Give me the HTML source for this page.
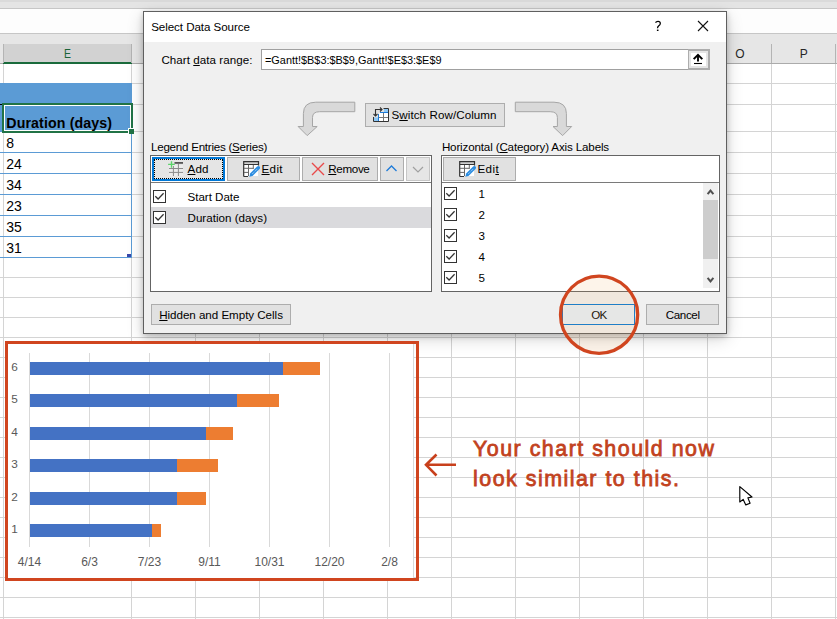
<!DOCTYPE html>
<html><head><meta charset="utf-8"><style>
html,body{margin:0;padding:0;}
body{width:837px;height:619px;overflow:hidden;position:relative;background:#fff;font-family:"Liberation Sans",sans-serif;}
body>div,body>svg{position:absolute;}
.t{white-space:nowrap;line-height:1;}
u{text-decoration:underline;text-underline-offset:1px;}
</style></head><body>
<div style="left:0px;top:0px;width:837px;height:8px;background:#e4e4e4"></div>
<div style="left:0px;top:0px;width:837px;height:2px;background:#dadada"></div>
<div style="left:0px;top:8px;width:837px;height:1px;background:#c6c6c6"></div>
<div style="left:0px;top:9px;width:837px;height:24px;background:#fdfdfd"></div>
<div style="left:0px;top:33px;width:837px;height:1px;background:#c6c6c6"></div>
<div style="left:0px;top:34px;width:837px;height:10px;background:#e6e6e6"></div>
<div style="left:0px;top:44px;width:837px;height:19px;background:#e6e6e6"></div>
<div style="left:0px;top:63px;width:837px;height:1px;background:#ababab"></div>
<div style="left:4px;top:44px;width:127px;height:18px;background:#d2d2d2"></div>
<div style="left:3px;top:62px;width:129px;height:2px;background:#1a6b3c"></div>
<div style="left:3px;top:44px;width:1px;height:19px;background:#b4b4b4"></div>
<div style="left:131px;top:44px;width:1px;height:19px;background:#b4b4b4"></div>
<div style="left:195px;top:44px;width:1px;height:19px;background:#b4b4b4"></div>
<div style="left:259px;top:44px;width:1px;height:19px;background:#b4b4b4"></div>
<div style="left:323px;top:44px;width:1px;height:19px;background:#b4b4b4"></div>
<div style="left:387px;top:44px;width:1px;height:19px;background:#b4b4b4"></div>
<div style="left:451px;top:44px;width:1px;height:19px;background:#b4b4b4"></div>
<div style="left:515px;top:44px;width:1px;height:19px;background:#b4b4b4"></div>
<div style="left:579px;top:44px;width:1px;height:19px;background:#b4b4b4"></div>
<div style="left:643px;top:44px;width:1px;height:19px;background:#b4b4b4"></div>
<div style="left:707px;top:44px;width:1px;height:19px;background:#b4b4b4"></div>
<div style="left:771px;top:44px;width:1px;height:19px;background:#b4b4b4"></div>
<div style="left:835px;top:44px;width:1px;height:19px;background:#b4b4b4"></div>
<div class="t" style="left:3.5px;top:45px;width:127px;text-align:center;color:#1a6338;font-size:12.3px;line-height:19px;transform:scaleX(0.85)">E</div>
<div class="t" style="left:708px;top:45px;width:64px;text-align:center;color:#262626;font-size:12px;line-height:19px">O</div>
<div class="t" style="left:771.8px;top:45px;width:64px;text-align:center;color:#262626;font-size:12px;line-height:19px">P</div>
<div style="left:3px;top:64px;width:1px;height:555px;background:#d4d4d4"></div>
<div style="left:131px;top:64px;width:1px;height:555px;background:#d4d4d4"></div>
<div style="left:195px;top:64px;width:1px;height:555px;background:#d4d4d4"></div>
<div style="left:259px;top:64px;width:1px;height:555px;background:#d4d4d4"></div>
<div style="left:323px;top:64px;width:1px;height:555px;background:#d4d4d4"></div>
<div style="left:387px;top:64px;width:1px;height:555px;background:#d4d4d4"></div>
<div style="left:451px;top:64px;width:1px;height:555px;background:#d4d4d4"></div>
<div style="left:515px;top:64px;width:1px;height:555px;background:#d4d4d4"></div>
<div style="left:579px;top:64px;width:1px;height:555px;background:#d4d4d4"></div>
<div style="left:643px;top:64px;width:1px;height:555px;background:#d4d4d4"></div>
<div style="left:707px;top:64px;width:1px;height:555px;background:#d4d4d4"></div>
<div style="left:771px;top:64px;width:1px;height:555px;background:#d4d4d4"></div>
<div style="left:835px;top:64px;width:1px;height:555px;background:#d4d4d4"></div>
<div style="left:0px;top:83px;width:837px;height:1px;background:#d4d4d4"></div>
<div style="left:0px;top:104px;width:837px;height:1px;background:#d4d4d4"></div>
<div style="left:0px;top:131px;width:837px;height:1px;background:#d4d4d4"></div>
<div style="left:0px;top:152px;width:837px;height:1px;background:#d4d4d4"></div>
<div style="left:0px;top:173px;width:837px;height:1px;background:#d4d4d4"></div>
<div style="left:0px;top:194px;width:837px;height:1px;background:#d4d4d4"></div>
<div style="left:0px;top:215px;width:837px;height:1px;background:#d4d4d4"></div>
<div style="left:0px;top:236px;width:837px;height:1px;background:#d4d4d4"></div>
<div style="left:0px;top:257px;width:837px;height:1px;background:#d4d4d4"></div>
<div style="left:0px;top:277px;width:837px;height:1px;background:#d4d4d4"></div>
<div style="left:0px;top:297px;width:837px;height:1px;background:#d4d4d4"></div>
<div style="left:0px;top:317px;width:837px;height:1px;background:#d4d4d4"></div>
<div style="left:0px;top:337px;width:837px;height:1px;background:#d4d4d4"></div>
<div style="left:0px;top:357px;width:837px;height:1px;background:#d4d4d4"></div>
<div style="left:0px;top:377px;width:837px;height:1px;background:#d4d4d4"></div>
<div style="left:0px;top:397px;width:837px;height:1px;background:#d4d4d4"></div>
<div style="left:0px;top:417px;width:837px;height:1px;background:#d4d4d4"></div>
<div style="left:0px;top:437px;width:837px;height:1px;background:#d4d4d4"></div>
<div style="left:0px;top:457px;width:837px;height:1px;background:#d4d4d4"></div>
<div style="left:0px;top:477px;width:837px;height:1px;background:#d4d4d4"></div>
<div style="left:0px;top:497px;width:837px;height:1px;background:#d4d4d4"></div>
<div style="left:0px;top:517px;width:837px;height:1px;background:#d4d4d4"></div>
<div style="left:0px;top:537px;width:837px;height:1px;background:#d4d4d4"></div>
<div style="left:0px;top:557px;width:837px;height:1px;background:#d4d4d4"></div>
<div style="left:0px;top:577px;width:837px;height:1px;background:#d4d4d4"></div>
<div style="left:0px;top:597px;width:837px;height:1px;background:#d4d4d4"></div>
<div style="left:0px;top:617px;width:837px;height:1px;background:#d4d4d4"></div>
<div style="left:0px;top:83px;width:132px;height:49px;background:#5b9bd5"></div>
<div style="left:0px;top:152px;width:132px;height:1px;background:#5b9bd5"></div>
<div style="left:0px;top:173px;width:132px;height:1px;background:#5b9bd5"></div>
<div style="left:0px;top:194px;width:132px;height:1px;background:#5b9bd5"></div>
<div style="left:0px;top:215px;width:132px;height:1px;background:#5b9bd5"></div>
<div style="left:0px;top:236px;width:132px;height:1px;background:#5b9bd5"></div>
<div style="left:0px;top:257px;width:132px;height:1px;background:#5b9bd5"></div>
<div style="left:131px;top:132px;width:1px;height:126px;background:#5b9bd5"></div>
<div style="left:127px;top:254px;width:4px;height:3px;background:#3949ab"></div>
<div style="left:0px;top:104px;width:2px;height:1px;background:#000"></div>
<div style="left:2px;top:103px;width:131px;height:30px;box-sizing:border-box;border:2px solid #217346"></div>
<div style="left:4px;top:105px;width:127px;height:26px;box-sizing:border-box;border:1px solid #fff"></div>
<div style="left:128px;top:128px;width:6px;height:6px;background:#fff"></div>
<div style="left:129px;top:129px;width:5px;height:5px;background:#217346"></div>
<div class="t" style="left:6.3px;top:115.5px;font-weight:bold;font-size:14.2px;color:#000;letter-spacing:0.12px">Duration (days)</div>
<div class="t" style="left:6.2px;top:136px;font-size:14px;color:#000">8</div>
<div class="t" style="left:6.2px;top:157px;font-size:14px;color:#000">24</div>
<div class="t" style="left:6.2px;top:178px;font-size:14px;color:#000">34</div>
<div class="t" style="left:6.2px;top:199px;font-size:14px;color:#000">23</div>
<div class="t" style="left:6.2px;top:220px;font-size:14px;color:#000">35</div>
<div class="t" style="left:6.2px;top:241px;font-size:14px;color:#000">31</div>
<div style="left:143px;top:11px;width:584px;height:323px;box-shadow:0 2px 6px rgba(0,0,0,0.22), 0 5px 16px rgba(0,0,0,0.16);background:#f0f0f0"></div>
<div style="left:143px;top:11px;width:584px;height:323px;box-sizing:border-box;border:1px solid #5f5f5f;background:#f0f0f0"></div>
<div style="left:144px;top:12px;width:582px;height:30px;background:#fff"></div>
<div class="t" style="left:151.2px;top:21px;font-size:11.6px;color:#000;letter-spacing:-0.07px">Select Data Source</div>
<svg style="position:absolute;left:650px;top:18px" width="16" height="16"><path d="M5.5 4.6 Q6.2 3.4 8 3.4 Q10.3 3.4 10.3 5.4 Q10.3 6.7 8.8 7.8 Q7.5 8.8 7.5 10.2" fill="none" stroke="#000" stroke-width="1.25"/><rect x="6.9" y="11.6" width="1.6" height="1.4" fill="#000"/></svg>
<svg style="position:absolute;left:697px;top:20px" width="12" height="12"><path d="M1 1L11 11M11 1L1 11" stroke="#111" stroke-width="1.1"/></svg>
<div class="t" style="left:161.4px;top:54px;font-size:11.6px;color:#000;letter-spacing:0.05px">Chart <u>d</u>ata range:</div>
<div style="left:261px;top:49px;width:428px;height:21px;box-sizing:border-box;border:1px solid #a0a0a0;background:#fff;border-right:none"></div>
<div class="t" style="left:265px;top:55px;font-size:10.9px;color:#000">=Gantt!$B$3:$B$9,Gantt!$E$3:$E$9</div>
<div style="left:688px;top:49px;width:22px;height:21px;box-sizing:border-box;border:2px solid #adadad;border-left-width:1px;background:#e5e5e5"></div>
<div style="left:691px;top:53px;width:15px;height:13px;background:#fff"></div>
<svg style="position:absolute;left:688px;top:49px" width="22" height="21"><path d="M6.4 9.4 L10 5.8 L13.6 9.4" fill="none" stroke="#000" stroke-width="2" stroke-linecap="square"/><path d="M10 6.5 V12.6" stroke="#000" stroke-width="1.9"/><path d="M6 14.5 H14" stroke="#000" stroke-width="1.1"/></svg>
<svg style="position:absolute;left:290px;top:95px" width="80" height="45"><path d="M64.8 7.2 H25.8 Q13.4 7.2 13.4 18.6 V31.5 H8.1 L17.2 40.6 L27.2 31.5 H22.5 V22.5 Q22.5 16.7 29.6 16.7 H64.8 Z" fill="#d9d9d9" stroke="#a6a6a6" stroke-width="1"/></svg>
<svg style="position:absolute;left:500px;top:95px" width="80" height="45"><path d="M15.3 7.2 H54 Q66.4 7.2 66.4 18.6 V31.5 H71.7 L62.6 40.6 L53 31.5 H57.4 V22.5 Q57.4 16.7 50.2 16.7 H15.3 Z" fill="#d9d9d9" stroke="#a6a6a6" stroke-width="1"/></svg>
<div style="left:365px;top:103px;width:140px;height:24px;box-sizing:border-box;border:1px solid #adadad;background:#e1e1e1"></div>
<svg style="position:absolute;left:370px;top:104px" width="22" height="22">
<rect x="14" y="5" width="4" height="3.5" fill="#8ec8f6"/>
<rect x="4" y="13.5" width="4" height="4" fill="#8ec8f6"/>
<rect x="9" y="9" width="9" height="8.5" fill="#fff"/>
<path d="M3.5 13 V17.5 H18.5 V4.5 H13.5" fill="none" stroke="#333" stroke-width="1"/>
<path d="M9 13.5 H18 M13.5 9 V17" stroke="#777" stroke-width="1"/>
<path d="M10 8.5 H18 M8.5 10 V17" stroke="#1e7bd8" stroke-width="1"/>
<path d="M5.5 12 V5.5 H12 M10 3.5 L12 5.5 L10 7.5 M3.5 10 L5.5 12 L7.5 10" fill="none" stroke="#333" stroke-width="1.1"/>
</svg>
<div class="t" style="left:391.5px;top:109px;font-size:11.6px;color:#000;letter-spacing:0.08px">S<u>w</u>itch Row/Column</div>
<div class="t" style="left:151px;top:141px;font-size:11.6px;color:#000;letter-spacing:-0.25px">Legend Entries (<u>S</u>eries)</div>
<div style="left:150px;top:155px;width:282px;height:137px;box-sizing:border-box;border:1px solid #646464;background:#fff"></div>
<div style="left:151px;top:156px;width:280px;height:26px;background:#fff"></div>
<div style="left:151px;top:182px;width:280px;height:1px;background:#7a7a7a"></div>
<div style="left:152px;top:157px;width:73px;height:24px;box-sizing:border-box;border:2px solid #0078d7;background:#e5e5e5"></div>
<div style="left:154px;top:159px;width:69px;height:20px;box-sizing:border-box;border:1px dotted #000"></div>
<svg style="position:absolute;left:164px;top:158px" width="22" height="22">
<rect x="5" y="7" width="14" height="11" fill="#ececec"/>
<path d="M9.4 8 V18 M14.4 6 V18 M5 10.5 H19 M5 14.4 H19" stroke="#8a8a8a" stroke-width="1"/>
<rect x="10.5" y="4" width="8.5" height="1.8" fill="#555"/>
<path d="M4.1 6.4 H10.8 M7.5 3.2 V9.8" stroke="#5cd36a" stroke-width="1.4"/>
</svg>
<div class="t" style="left:187.5px;top:163px;font-size:11.6px;color:#000;letter-spacing:0.2px"><u>A</u>dd</div>
<div style="left:227px;top:157px;width:73px;height:24px;box-sizing:border-box;border:1px solid #adadad;background:#e1e1e1"></div>
<svg style="position:absolute;left:240px;top:158px" width="22" height="22"><rect x="4" y="4" width="14" height="2.5" fill="#d0d0d0"/>
<rect x="4" y="7" width="14" height="11" fill="#fff"/>
<path d="M3.7 18.5 V3.7 H18.5 V7.5 M3.7 18.5 H8" fill="none" stroke="#333" stroke-width="1.2"/>
<path d="M4 6.5 H18" stroke="#333" stroke-width="1"/>
<path d="M8.5 7 V18 M13.3 7 V11 M4 10.3 H13 M4 14.4 H9" stroke="#666" stroke-width="1"/>
<path d="M9.3 18.8 L10.1 15.5 L17.1 8.5 Q18.5 7.4 19.6 8.5 Q20.6 9.7 19.5 10.9 L12.5 17.9 Z" fill="#2b8ce0"/>
<path d="M12.3 15.9 L17.8 10.4" stroke="#d5eafc" stroke-width="0.9" stroke-dasharray="1 1"/></svg>
<div class="t" style="left:261.5px;top:163px;font-size:11.6px;color:#000;letter-spacing:0.37px"><u>E</u>dit</div>
<div style="left:302px;top:157px;width:76px;height:24px;box-sizing:border-box;border:1px solid #adadad;background:#e1e1e1"></div>
<svg style="position:absolute;left:310px;top:161px" width="16" height="16"><path d="M2 2L14 14M14 2L2 14" stroke="#e84a4a" stroke-width="1.4"/></svg>
<div class="t" style="left:328.3px;top:163px;font-size:11.6px;color:#000;letter-spacing:-0.34px"><u>R</u>emove</div>
<div style="left:380px;top:157px;width:24px;height:24px;box-sizing:border-box;border:1px solid #adadad;background:#e1e1e1"></div>
<svg style="position:absolute;left:380px;top:157px" width="24" height="24"><path d="M6.5 14 L11.5 9 L16.5 14" fill="none" stroke="#1e7bd8" stroke-width="1.3"/></svg>
<div style="left:406px;top:157px;width:24px;height:24px;box-sizing:border-box;border:1px solid #c6c6c6;background:#e6e6e6"></div>
<svg style="position:absolute;left:406px;top:157px" width="24" height="24"><path d="M7 10 L12 15 L17 10" fill="none" stroke="#a0a0a0" stroke-width="1.2"/></svg>
<div style="left:151px;top:207px;width:280px;height:21px;background:#dadadd"></div>
<svg style="position:absolute;left:153px;top:190px" width="13" height="13"><rect x="0.5" y="0.5" width="12" height="12" fill="#fff" stroke="#333"/><path d="M2.3 6.2 L5.1 9 L10.6 3.3" fill="none" stroke="#333" stroke-width="1.25"/></svg>
<div class="t" style="left:187.5px;top:191px;font-size:11.6px;color:#000;letter-spacing:-0.02px">Start Date</div>
<svg style="position:absolute;left:153px;top:211px" width="13" height="13"><rect x="0.5" y="0.5" width="12" height="12" fill="#fff" stroke="#333"/><path d="M2.3 6.2 L5.1 9 L10.6 3.3" fill="none" stroke="#333" stroke-width="1.25"/></svg>
<div class="t" style="left:187.5px;top:212px;font-size:11.6px;color:#000;letter-spacing:0.02px">Duration (days)</div>
<div class="t" style="left:441.9px;top:141px;font-size:11.6px;color:#000;letter-spacing:-0.15px">Horizontal (<u>C</u>ategory) Axis Labels</div>
<div style="left:441px;top:155px;width:279px;height:137px;box-sizing:border-box;border:1px solid #646464;background:#fff"></div>
<div style="left:442px;top:182px;width:277px;height:1px;background:#7a7a7a"></div>
<div style="left:443px;top:157px;width:73px;height:24px;box-sizing:border-box;border:1px solid #adadad;background:#e1e1e1"></div>
<svg style="position:absolute;left:456px;top:158px" width="22" height="22"><rect x="4" y="4" width="14" height="2.5" fill="#d0d0d0"/>
<rect x="4" y="7" width="14" height="11" fill="#fff"/>
<path d="M3.7 18.5 V3.7 H18.5 V7.5 M3.7 18.5 H8" fill="none" stroke="#333" stroke-width="1.2"/>
<path d="M4 6.5 H18" stroke="#333" stroke-width="1"/>
<path d="M8.5 7 V18 M13.3 7 V11 M4 10.3 H13 M4 14.4 H9" stroke="#666" stroke-width="1"/>
<path d="M9.3 18.8 L10.1 15.5 L17.1 8.5 Q18.5 7.4 19.6 8.5 Q20.6 9.7 19.5 10.9 L12.5 17.9 Z" fill="#2b8ce0"/>
<path d="M12.3 15.9 L17.8 10.4" stroke="#d5eafc" stroke-width="0.9" stroke-dasharray="1 1"/></svg>
<div class="t" style="left:477.5px;top:163px;font-size:11.6px;color:#000;letter-spacing:0.37px">Edi<u>t</u></div>
<svg style="position:absolute;left:444px;top:187px" width="13" height="13"><rect x="0.5" y="0.5" width="12" height="12" fill="#fff" stroke="#333"/><path d="M2.3 6.2 L5.1 9 L10.6 3.3" fill="none" stroke="#333" stroke-width="1.25"/></svg>
<div class="t" style="left:478.5px;top:188px;font-size:11.6px;color:#000">1</div>
<svg style="position:absolute;left:444px;top:208px" width="13" height="13"><rect x="0.5" y="0.5" width="12" height="12" fill="#fff" stroke="#333"/><path d="M2.3 6.2 L5.1 9 L10.6 3.3" fill="none" stroke="#333" stroke-width="1.25"/></svg>
<div class="t" style="left:478.5px;top:209px;font-size:11.6px;color:#000">2</div>
<svg style="position:absolute;left:444px;top:229px" width="13" height="13"><rect x="0.5" y="0.5" width="12" height="12" fill="#fff" stroke="#333"/><path d="M2.3 6.2 L5.1 9 L10.6 3.3" fill="none" stroke="#333" stroke-width="1.25"/></svg>
<div class="t" style="left:478.5px;top:230px;font-size:11.6px;color:#000">3</div>
<svg style="position:absolute;left:444px;top:250px" width="13" height="13"><rect x="0.5" y="0.5" width="12" height="12" fill="#fff" stroke="#333"/><path d="M2.3 6.2 L5.1 9 L10.6 3.3" fill="none" stroke="#333" stroke-width="1.25"/></svg>
<div class="t" style="left:478.5px;top:251px;font-size:11.6px;color:#000">4</div>
<svg style="position:absolute;left:444px;top:271px" width="13" height="13"><rect x="0.5" y="0.5" width="12" height="12" fill="#fff" stroke="#333"/><path d="M2.3 6.2 L5.1 9 L10.6 3.3" fill="none" stroke="#333" stroke-width="1.25"/></svg>
<div class="t" style="left:478.5px;top:272px;font-size:11.6px;color:#000">5</div>
<div style="left:703px;top:183px;width:15px;height:105px;background:#f0f0f0"></div>
<div style="left:703px;top:200px;width:15px;height:59px;background:#cdcdcd"></div>
<svg style="position:absolute;left:703px;top:183px" width="15" height="105"><path d="M4.6 11.2 L7.5 7.6 L10.4 11.2" fill="none" stroke="#505050" stroke-width="2"/><path d="M4.6 94.8 L7.5 98.4 L10.4 94.8" fill="none" stroke="#505050" stroke-width="2"/></svg>
<div style="left:151px;top:304px;width:140px;height:21px;box-sizing:border-box;border:1px solid #adadad;background:#e1e1e1"></div>
<div class="t" style="left:159.2px;top:309px;font-size:11.6px;color:#000;letter-spacing:-0.03px"><u>H</u>idden and Empty Cells</div>
<div style="left:562px;top:304px;width:73px;height:21px;box-sizing:border-box;border:1px solid #0078d7;background:#f0f0f0"></div>
<div style="left:564px;top:306px;width:69px;height:17px;background:#e5f1fb"></div>
<div class="t" style="left:562px;top:309px;font-size:11.6px;color:#000;width:73px;text-align:center;letter-spacing:-0.7px;text-indent:0.7px">OK</div>
<div style="left:646px;top:304px;width:73px;height:21px;box-sizing:border-box;border:1px solid #adadad;background:#e1e1e1"></div>
<div class="t" style="left:646px;top:309px;font-size:11.6px;color:#000;width:73px;text-align:center;letter-spacing:-0.38px;text-indent:0.38px">Cancel</div>
<svg style="position:absolute;left:555px;top:270px" width="90" height="90"><circle cx="44.1" cy="44.7" r="38.6" fill="rgba(240,170,90,0.13)" stroke="#d0451f" stroke-width="3.3"/></svg>
<div style="left:5px;top:341px;width:414px;height:240px;box-sizing:border-box;border:3px solid #d0451f"></div>
<div style="left:8px;top:344px;width:405px;height:234px;background:#fff"></div>
<div style="left:413px;top:344px;width:1px;height:234px;background:#d9d9d9"></div>
<div style="left:29px;top:353px;width:1px;height:194px;background:#d9d9d9"></div>
<div style="left:89px;top:353px;width:1px;height:194px;background:#d9d9d9"></div>
<div style="left:149px;top:353px;width:1px;height:194px;background:#d9d9d9"></div>
<div style="left:209px;top:353px;width:1px;height:194px;background:#d9d9d9"></div>
<div style="left:269px;top:353px;width:1px;height:194px;background:#d9d9d9"></div>
<div style="left:329px;top:353px;width:1px;height:194px;background:#d9d9d9"></div>
<div style="left:389px;top:353px;width:1px;height:194px;background:#d9d9d9"></div>
<div style="left:30px;top:362px;width:253px;height:13px;background:#4472c4"></div>
<div style="left:283px;top:362px;width:37px;height:13px;background:#ed7d31"></div>
<div style="left:30px;top:394px;width:207px;height:13px;background:#4472c4"></div>
<div style="left:237px;top:394px;width:42px;height:13px;background:#ed7d31"></div>
<div style="left:30px;top:427px;width:176px;height:13px;background:#4472c4"></div>
<div style="left:206px;top:427px;width:27px;height:13px;background:#ed7d31"></div>
<div style="left:30px;top:459px;width:147px;height:13px;background:#4472c4"></div>
<div style="left:177px;top:459px;width:41px;height:13px;background:#ed7d31"></div>
<div style="left:30px;top:492px;width:147px;height:13px;background:#4472c4"></div>
<div style="left:177px;top:492px;width:29px;height:13px;background:#ed7d31"></div>
<div style="left:30px;top:524px;width:122px;height:13px;background:#4472c4"></div>
<div style="left:152px;top:524px;width:9px;height:13px;background:#ed7d31"></div>
<div class="t" style="left:11.3px;top:361.5px;font-size:11.8px;color:#595959">6</div>
<div class="t" style="left:11.3px;top:393.5px;font-size:11.8px;color:#595959">5</div>
<div class="t" style="left:11.3px;top:426.5px;font-size:11.8px;color:#595959">4</div>
<div class="t" style="left:11.3px;top:458.5px;font-size:11.8px;color:#595959">3</div>
<div class="t" style="left:11.3px;top:491.5px;font-size:11.8px;color:#595959">2</div>
<div class="t" style="left:11.3px;top:523.5px;font-size:11.8px;color:#595959">1</div>
<div class="t" style="left:-0.5px;top:555.5px;font-size:12px;color:#595959;width:60px;text-align:center">4/14</div>
<div class="t" style="left:59.5px;top:555.5px;font-size:12px;color:#595959;width:60px;text-align:center">6/3</div>
<div class="t" style="left:119.5px;top:555.5px;font-size:12px;color:#595959;width:60px;text-align:center">7/23</div>
<div class="t" style="left:179.5px;top:555.5px;font-size:12px;color:#595959;width:60px;text-align:center">9/11</div>
<div class="t" style="left:239.5px;top:555.5px;font-size:12px;color:#595959;width:60px;text-align:center">10/31</div>
<div class="t" style="left:299.5px;top:555.5px;font-size:12px;color:#595959;width:60px;text-align:center">12/20</div>
<div class="t" style="left:359.5px;top:555.5px;font-size:12px;color:#595959;width:60px;text-align:center">2/8</div>
<svg style="position:absolute;left:420px;top:450px" width="40" height="30"><path d="M36 14.8 H6 M16.5 4.5 L6 14.8 L16.5 25.5" fill="none" stroke="#c8401c" stroke-width="2.6"/></svg>
<div class="t" style="left:473px;top:438.5px;font-size:21.4px;color:#c2421e;white-space:nowrap;-webkit-text-stroke:0.8px #c2421e;letter-spacing:1.5px">Your chart should now</div>
<div class="t" style="left:473px;top:468.5px;font-size:21.4px;color:#c2421e;white-space:nowrap;-webkit-text-stroke:0.8px #c2421e;letter-spacing:1.5px">look similar to this.</div>
<svg style="position:absolute;left:732px;top:480px" width="28" height="30"><path d="M7.8 6.6 L7.8 22 L11.2 19.4 L13.8 24.9 L18.1 23.2 L15.9 17.9 L20 17 Z" fill="#fff" stroke="#000" stroke-width="1.15" stroke-linejoin="round"/></svg>
</body></html>
